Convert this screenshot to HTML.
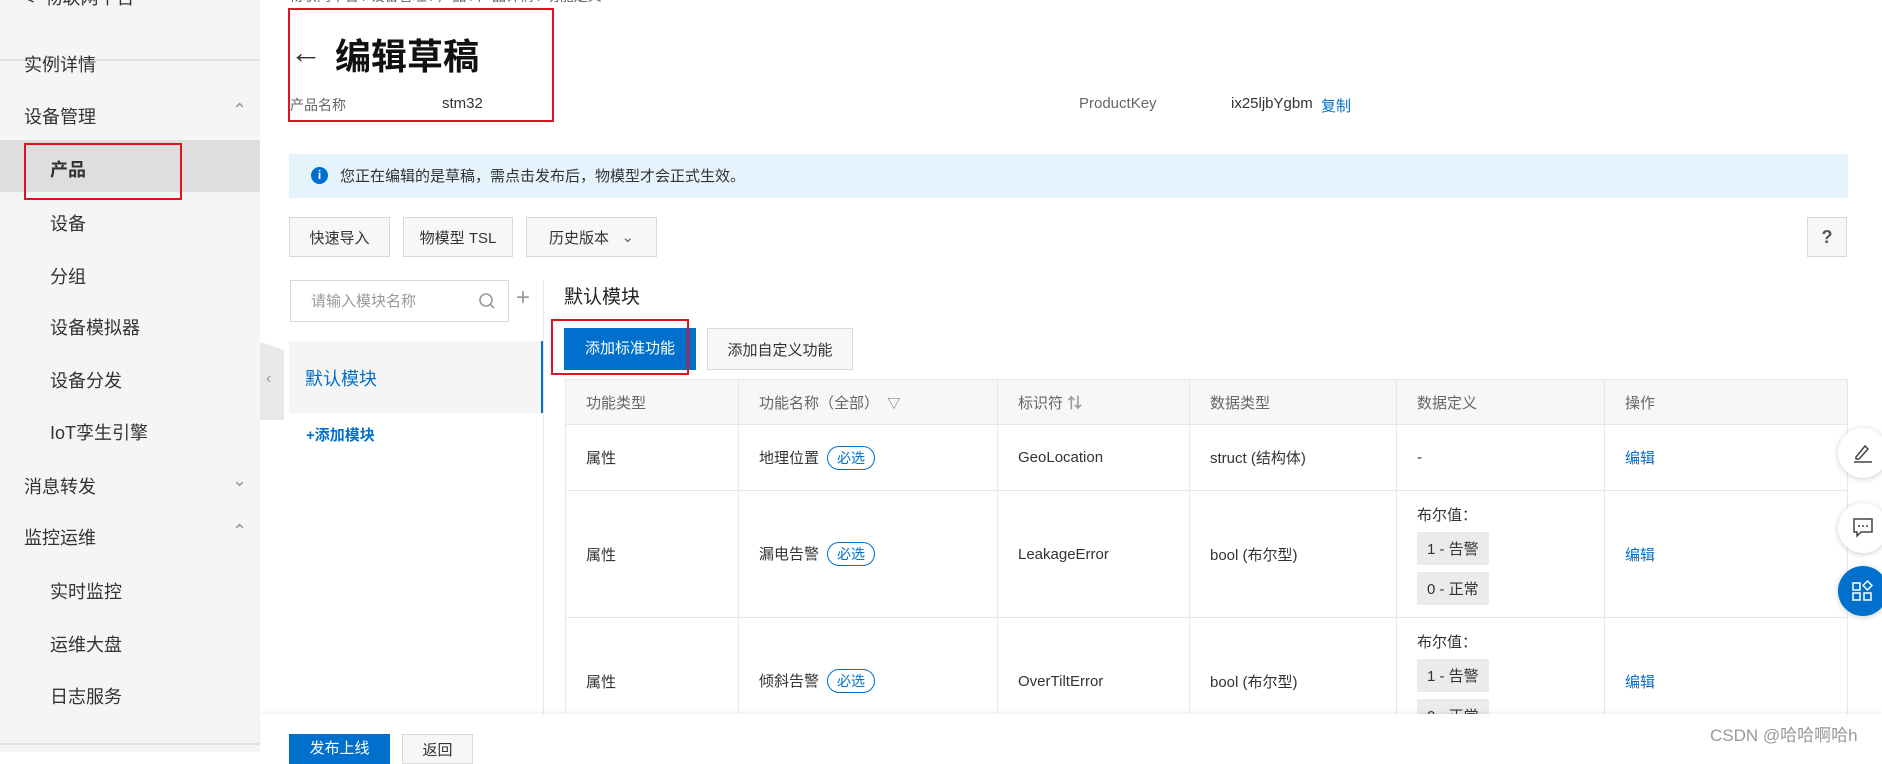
<!DOCTYPE html>
<html><head><meta charset="utf-8"><style>
*{margin:0;padding:0;box-sizing:border-box}
body{width:1882px;height:752px;overflow:hidden;background:#fff;font-family:"Liberation Sans","Noto Sans CJK SC",sans-serif;color:#333;position:relative}
.a{position:absolute;white-space:nowrap}
.side{position:absolute;left:0;top:0;width:260px;height:752px;background:#f5f5f5}
.si{position:absolute;font-size:18px;color:#333}
.btn{position:absolute;border:1px solid #d9d9d9;background:#f7f7f7;font-size:15px;color:#333;display:flex;align-items:center;justify-content:center}
.red{position:absolute;border:2px solid #e0141e}
table{position:absolute;left:565px;top:379px;width:1283px;border-collapse:collapse;font-size:15px}
td{border:1px solid #e8e8e8;padding:0 0 0 20px;vertical-align:middle;color:#333}
th{border:1px solid #e8e8e8;background:#f7f7f7;font-weight:normal;color:#666;text-align:left;padding-left:20px;height:45px}
.tag{display:inline-block;border:1px solid #0070cc;color:#0070cc;border-radius:12px;font-size:14px;padding:1px 9px;margin-left:8px}
.bv{background:#ebebeb;display:inline-block;padding:6px 10px;margin-top:7px;font-size:15px}
.blue{color:#0070cc}
.fb{position:absolute;left:1838px;width:50px;height:50px;border-radius:25px;background:#fff;box-shadow:0 1px 6px rgba(0,0,0,.2)}
</style></head><body>
<div class="side">
<div class="si" style="left:24px;top:-16px;color:#333">&lt;&nbsp; 物联网平台</div>
<div style="position:absolute;left:0;top:59px;width:260px;height:2px;background:#e2e2e2"></div>
<div class="si" style="left:24px;top:51px">实例详情</div>
<div class="si" style="left:24px;top:103px">设备管理</div><div class="si" style="left:232px;top:100px;color:#999">&#8963;</div>
<div style="position:absolute;left:0;top:140px;width:260px;height:52px;background:#dedede"></div>
<div class="si" style="left:50px;top:156px;font-weight:bold">产品</div>
<div class="si" style="left:50px;top:210px">设备</div>
<div class="si" style="left:50px;top:263px">分组</div>
<div class="si" style="left:50px;top:314px">设备模拟器</div>
<div class="si" style="left:50px;top:367px">设备分发</div>
<div class="si" style="left:50px;top:419px">IoT孪生引擎</div>
<div class="si" style="left:24px;top:473px">消息转发</div><div class="si" style="left:232px;top:470px;color:#999">&#8964;</div>
<div class="si" style="left:24px;top:524px">监控运维</div><div class="si" style="left:232px;top:521px;color:#999">&#8963;</div>
<div class="si" style="left:50px;top:578px">实时监控</div>
<div class="si" style="left:50px;top:631px">运维大盘</div>
<div class="si" style="left:50px;top:683px">日志服务</div>
<div style="position:absolute;left:0;top:743px;width:260px;height:2px;background:#e2e2e2"></div>
</div>
<div class="red" style="left:24px;top:143px;width:158px;height:57px"></div>
<div style="position:absolute;left:260px;top:342px;width:24px;height:78px;background:#e8e8e8;clip-path:polygon(0 0,100% 10%,100% 100%,0 100%)"></div>
<div class="a" style="left:266px;top:370px;color:#999;font-size:16px">&#8249;</div>

<div class="a" style="left:289px;top:-14px;font-size:14px;color:#666">物联网平台 / 设备管理 / 产品 / 产品详情 / 功能定义</div>
<div class="a" style="left:290px;top:34px;font-size:32px">&#8592;</div>
<div class="a" style="left:335px;top:28px;font-size:36px;font-weight:bold;color:#111">编辑草稿</div>
<div class="a" style="left:290px;top:95px;font-size:14px;color:#666">产品名称</div>
<div class="a" style="left:442px;top:95px;font-size:15px">stm32</div>
<div class="red" style="left:288px;top:8px;width:266px;height:114px"></div>
<div class="a" style="left:1079px;top:95px;font-size:15px;color:#666">ProductKey</div>
<div class="a" style="left:1231px;top:95px;font-size:15px">ix25ljbYgbm</div>
<div class="a blue" style="left:1321px;top:95px;font-size:15px">复制</div>

<div style="position:absolute;left:289px;top:154px;width:1559px;height:44px;background:#e5f3fd"></div>
<div class="a" style="left:311px;top:167px;width:17px;height:17px;border-radius:50%;background:#0070cc;color:#fff;font-size:12px;font-weight:bold;text-align:center;line-height:17px">i</div>
<div class="a" style="left:340px;top:165px;font-size:15px">您正在编辑的是草稿，需点击发布后，物模型才会正式生效。</div>

<div class="btn" style="left:289px;top:217px;width:101px;height:40px">快速导入</div>
<div class="btn" style="left:403px;top:217px;width:110px;height:40px">物模型 TSL</div>
<div class="btn" style="left:526px;top:217px;width:131px;height:40px">历史版本&nbsp;&nbsp;&nbsp;<span style="color:#666">&#8964;</span></div>
<div class="btn" style="left:1807px;top:217px;width:40px;height:40px;font-weight:bold;font-size:18px;color:#555">?</div>

<div style="position:absolute;left:290px;top:280px;width:219px;height:42px;border:1px solid #d9d9d9"></div>
<div class="a" style="left:311px;top:290px;font-size:15px;color:#999">请输入模块名称</div>
<svg class="a" style="left:478px;top:292px" width="18" height="18"><circle cx="8" cy="8" r="6" fill="none" stroke="#999" stroke-width="1.6"/><line x1="12" y1="12" x2="16" y2="16" stroke="#999" stroke-width="1.6"/></svg>
<div class="a" style="left:516px;top:284px;font-size:24px;color:#999">+</div>
<div style="position:absolute;left:543px;top:280px;width:1px;height:434px;background:#e8e8e8"></div>
<div style="position:absolute;left:289px;top:341px;width:254px;height:72px;background:#f5f5f5;border-right:2px solid #0070cc"></div>
<div class="a blue" style="left:305px;top:365px;font-size:18px">默认模块</div>
<div class="a blue" style="left:306px;top:424px;font-size:15px;font-weight:bold">+添加模块</div>

<div class="a" style="left:564px;top:282px;font-size:19px;color:#222">默认模块</div>
<div class="a" style="left:564px;top:328px;width:132px;height:42px;background:#0070cc;color:#fff;font-size:15px;text-align:center;line-height:42px">添加标准功能</div>
<div class="btn" style="left:707px;top:328px;width:146px;height:42px">添加自定义功能</div>
<div class="red" style="left:551px;top:319px;width:138px;height:56px"></div>

<table>
<tr><th style="width:173px">功能类型</th><th style="width:259px">功能名称（全部）&nbsp;&nbsp;<span style="font-size:13px">&#9661;</span></th><th style="width:192px">标识符 <b style="color:#999">⇅</b></th><th style="width:207px">数据类型</th><th style="width:208px">数据定义</th><th>操作</th></tr>
<tr style="height:66px"><td>属性</td><td>地理位置<span class="tag">必选</span></td><td>GeoLocation</td><td>struct (结构体)</td><td>-</td><td class="blue">编辑</td></tr>
<tr style="height:127px"><td>属性</td><td>漏电告警<span class="tag">必选</span></td><td>LeakageError</td><td>bool (布尔型)</td><td>布尔值：<br><span class="bv">1 - 告警</span><br><span class="bv">0 - 正常</span></td><td class="blue">编辑</td></tr>
<tr style="height:127px"><td>属性</td><td>倾斜告警<span class="tag">必选</span></td><td>OverTiltError</td><td>bool (布尔型)</td><td>布尔值：<br><span class="bv">1 - 告警</span><br><span class="bv">0 - 正常</span></td><td class="blue">编辑</td></tr>
</table>

<div style="position:absolute;left:260px;top:714px;width:1622px;height:38px;background:#fff;box-shadow:0 -2px 4px rgba(0,0,0,.06)"></div>
<div class="a" style="left:289px;top:734px;width:101px;height:30px;background:#0070cc;color:#fff;font-size:15px;text-align:center;line-height:30px">发布上线</div>
<div class="btn" style="left:402px;top:734px;width:71px;height:30px">返回</div>
<div class="a" style="left:1710px;top:721px;font-size:17px;color:#999">CSDN @哈哈啊哈h</div>

<div class="fb" style="top:428px"></div>
<svg class="a" style="left:1850px;top:440px" width="24" height="24"><path d="M6 17 L15 6 L18 9 L9 19 L6 19Z" fill="none" stroke="#444" stroke-width="1.5"/><line x1="4" y1="22" x2="22" y2="22" stroke="#444" stroke-width="1.5"/></svg>
<div class="fb" style="top:503px"></div>
<svg class="a" style="left:1851px;top:516px" width="24" height="24"><path d="M3 3 H21 V16 H10 L6 20 V16 H3Z" fill="none" stroke="#444" stroke-width="1.5"/><circle cx="8" cy="10" r="1" fill="#444"/><circle cx="12" cy="10" r="1" fill="#444"/><circle cx="16" cy="10" r="1" fill="#444"/></svg>
<div class="fb" style="top:566px;background:#0070cc"></div>
<svg class="a" style="left:1851px;top:579px" width="24" height="24"><rect x="2" y="4" width="7" height="7" fill="none" stroke="#fff" stroke-width="1.5"/><rect x="2" y="14" width="7" height="7" fill="none" stroke="#fff" stroke-width="1.5"/><rect x="13" y="14" width="7" height="7" fill="none" stroke="#fff" stroke-width="1.5"/><path d="M16.5 2 L21 6.5 L16.5 11 L12 6.5Z" fill="none" stroke="#fff" stroke-width="1.5"/></svg>
</body></html>
